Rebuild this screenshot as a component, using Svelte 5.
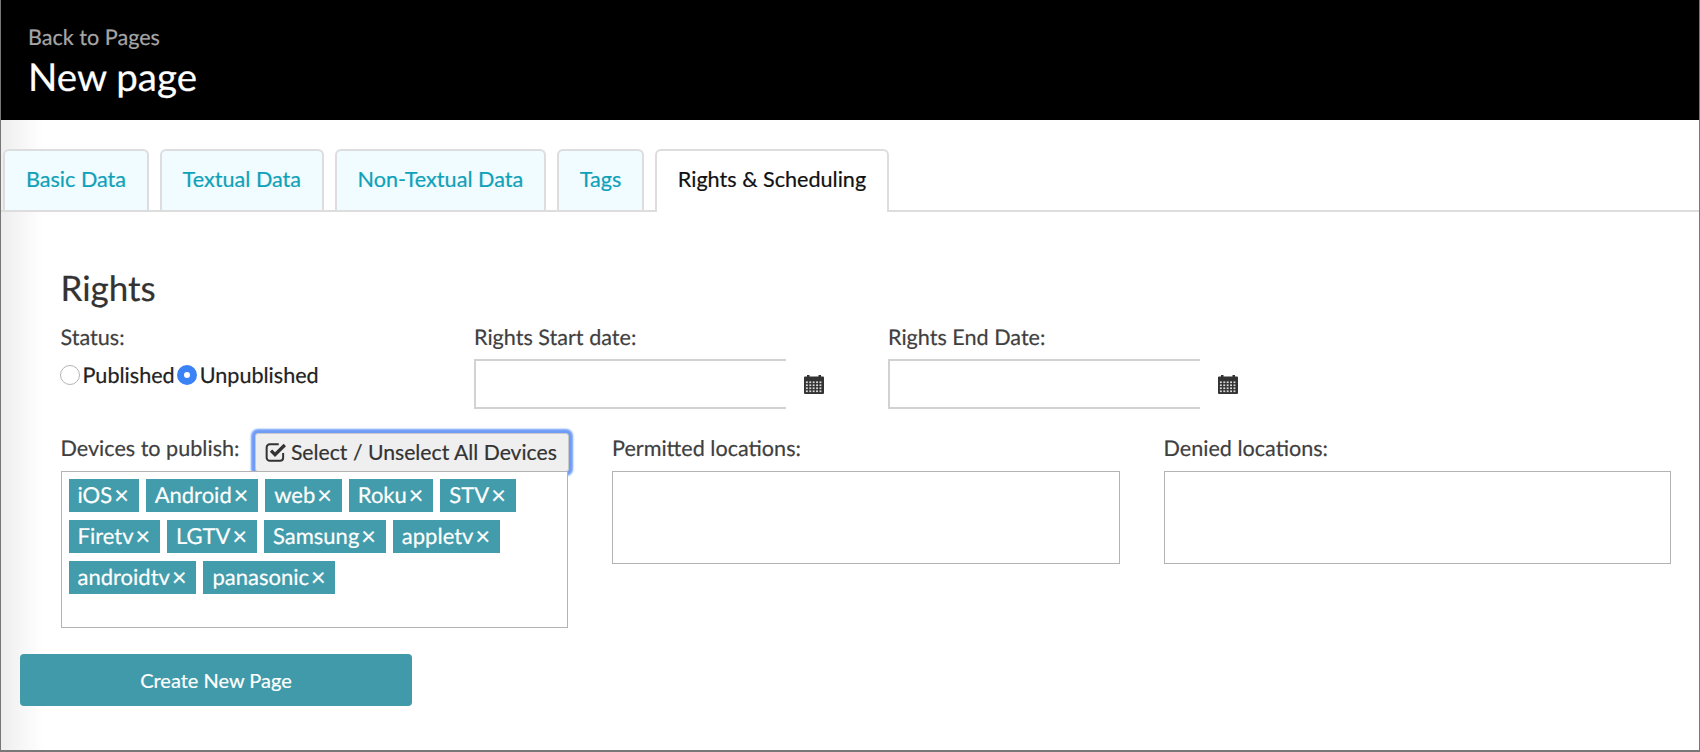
<script lang="ts">
	const tabs = ["Basic Data", "Textual Data", "Non-Textual Data", "Tags", "Rights & Scheduling"];
	const devices = ["iOS", "Android", "web", "Roku", "STV", "Firetv", "LGTV", "Samsung", "appletv", "androidtv", "panasonic"];
	const dateFields = ["Rights Start date:", "Rights End Date:"];
	const cells = [0, 1, 2, 3, 4];
	const rows = [0, 1, 2, 3];
	let status = $state("unpublished");
</script>

{#snippet calendar()}
	<svg class="calendar" width="20" height="20" viewBox="0 0 20 20" aria-hidden="true">
		<path d="M1 2.5h2V1h2.5v1.5h9V1H17v1.5h2a1 1 0 0 1 1 1V19a1 1 0 0 1-1 1H1a1 1 0 0 1-1-1V3.5a1 1 0 0 1 1-1z" fill="#333" />
		{#each rows as r}
			{#each cells as c}
				<rect x={1.9 + c * 3.4} y={7.4 + r * 3} width="1.9" height="1.7" fill="#d8d8d8" />
			{/each}
		{/each}
	</svg>
{/snippet}

<div class="page">
	<header>
		<a class="back" href="#pages">Back to Pages</a>
		<h1>New page</h1>
	</header>

	<nav class="tabs">
		{#each tabs as tab, i}
			<button class={["tab", i === tabs.length - 1 && "active"]}>{tab}</button>
		{/each}
	</nav>

	<form onsubmit={(e) => e.preventDefault()}>
		<section>
			<h2>Rights</h2>
			<div class="top-row">
				<div class="status">
					<div class="label">Status:</div>
					<div class="radios">
						<label>
							<span class={["radio", status === "published" && "on"]}></span>
							<input type="radio" bind:group={status} value="published" />Published
						</label>
						<label>
							<span class={["radio", status === "unpublished" && "on"]}></span>
							<input type="radio" bind:group={status} value="unpublished" />Unpublished
						</label>
					</div>
				</div>
				{#each dateFields as field}
					<div class="date-field">
						<div class="label">{field}</div>
						<div class="date-row">
							<input class="date" type="text" aria-label={field} />
							{@render calendar()}
						</div>
					</div>
				{/each}
			</div>

			<div class="bottom-row">
				<div class="col">
					<div class="devices-head">
						<span class="label">Devices to publish:</span>
						<button type="button" class="select-all">
							<svg width="22" height="22" viewBox="0 0 20 20" aria-hidden="true">
								<path d="M16.5 11v4.2a2.8 2.8 0 0 1-2.8 2.8H4.3a2.8 2.8 0 0 1-2.8-2.8V5.8A2.8 2.8 0 0 1 4.3 3h8.2" fill="none" stroke="#333" stroke-width="1.8" />
								<path d="M5.5 8.8l3.6 3.6L18 3.6" fill="none" stroke="#333" stroke-width="3" />
							</svg>
							Select / Unselect All Devices
						</button>
					</div>
					<div class="multi tall">
						{#each devices as device}
							<span class="chip">{device}<span class="x">×</span></span>
						{/each}
					</div>
				</div>
				<div class="col">
					<div class="label head">Permitted locations:</div>
					<div class="multi"></div>
				</div>
				<div class="col">
					<div class="label head">Denied locations:</div>
					<div class="multi"></div>
				</div>
			</div>
		</section>

		<button class="submit" type="submit">Create New Page</button>
	</form>
</div>

<style>
	:global(body) {
		margin: 0;
	}

	.page {
		box-sizing: border-box;
		height: 752px;
		overflow: hidden;
		font-family: Lato, "Open Sans", sans-serif;
		font-size: 21.6px;
		text-rendering: geometricPrecision;
		-webkit-text-stroke: 0.2px;
		color: #3f3f3f;
		border-right: 1px solid #777;
		border-bottom: 2px solid #777;
		border-left: 1px solid #777;
		background: linear-gradient(90deg, #eeeeee 0, #ffffff 42px);
	}

	header {
		box-sizing: border-box;
		height: 120px;
		margin: 0 -1px;
		padding: 24px 28px 0;
		background: #000;
	}

	.back {
		display: block;
		color: #a6a6a6;
		line-height: 26px;
		text-decoration: none;
	}

	h1 {
		margin: 3px 0 0;
		color: #fff;
		font-size: 38.5px;
		font-weight: 400;
		line-height: 48px;
	}

	.tabs {
		display: flex;
		gap: 11px;
		height: 61px;
		margin-top: 29px;
		padding-left: 2px;
		border-bottom: 2px solid #ddd;
		box-sizing: content-box;
	}

	.tab {
		height: 61px;
		padding: 0 20.5px 3px 21px;
		border: 2px solid #ddd;
		border-bottom: 0;
		border-radius: 6px 6px 0 0;
		background: #f0fcff;
		color: #0fa1b8;
		font: inherit;
	}

	.tab.active {
		height: 63px;
		padding-bottom: 5px;
		background: #fff;
		color: #111;
	}

	form {
		padding: 0 28px 0 19px;
	}

	section {
		padding: 55px 0 0 40.5px;
	}

	h2 {
		margin: 0;
		color: #333;
		font-size: 35px;
		font-weight: 400;
		line-height: 42px;
	}

	.top-row {
		display: flex;
		height: 102px;
		margin-top: 16px;
	}

	.label {
		line-height: 24px;
		white-space: nowrap;
	}

	.status {
		width: 413.5px;
	}

	.radios {
		display: flex;
		gap: 3px;
		margin-top: 14px;
		color: #222;
	}

	.radios label {
		display: flex;
		align-items: center;
		gap: 3px;
		line-height: 24px;
	}

	.radios input {
		display: none;
	}

	.radio {
		box-sizing: border-box;
		width: 20px;
		height: 20px;
		margin-left: -1px;
		border: 1px solid #b5b5b5;
		border-radius: 50%;
		background: #fff;
	}

	.radio.on {
		border: 7px solid #3b82f6;
	}

	.date-field {
		width: 414px;
	}

	.date-row {
		display: flex;
		align-items: center;
		gap: 18px;
		margin-top: 10px;
	}

	.date {
		box-sizing: border-box;
		width: 312px;
		height: 50px;
		padding: 0 8px;
		border: 2px solid #d2d2d2;
		border-right: 0;
		background: #fff;
		outline: none;
	}

	.calendar {
		flex: none;
	}

	.bottom-row {
		display: grid;
		grid-template-columns: repeat(3, 1fr);
		gap: 44px;
	}

	.col {
		display: flex;
		flex-direction: column;
		min-width: 0;
	}

	.devices-head {
		display: flex;
		align-items: flex-start;
		height: 44px;
	}

	.devices-head .label {
		margin-top: 9px;
	}

	.head {
		height: 44px;
		padding-top: 9px;
		box-sizing: border-box;
	}

	.select-all {
		position: relative;
		display: flex;
		align-items: center;
		gap: 4px;
		box-sizing: border-box;
		height: 39px;
		margin: 6px 0 0 15.5px;
		padding: 0 11px 2px 9px;
		border: 1px solid #c8c8c8;
		border-radius: 3px;
		background: #efefef;
		box-shadow: 0 0 2px 4px #6f9cf7;
		color: #333;
		font: inherit;
		font-size: 21.2px;
		white-space: nowrap;
	}

	.multi {
		position: relative;
		box-sizing: border-box;
		height: 93px;
		display: flex;
		flex-wrap: wrap;
		align-content: flex-start;
		gap: 8px 7px;
		padding: 7px 7px;
		border: 1.5px solid #b3b3b3;
		background: #fff;
	}

	.multi.tall {
		height: 157px;
	}

	.chip {
		display: flex;
		align-items: center;
		height: 33px;
		padding: 0 10px 2px 9px;
		box-sizing: border-box;
		background: #429cab;
		color: #fff;
		font-size: 22px;
		line-height: 33px;
	}

	.x {
		margin-left: 2px;
		font-size: 25px;
		line-height: 24px;
	}

	.submit {
		display: block;
		width: 392px;
		height: 52px;
		margin-top: 26px;
		border: 0;
		border-radius: 4px;
		background: #409aa9;
		color: #fff;
		font: inherit;
		font-size: 20px;
	}
</style>
